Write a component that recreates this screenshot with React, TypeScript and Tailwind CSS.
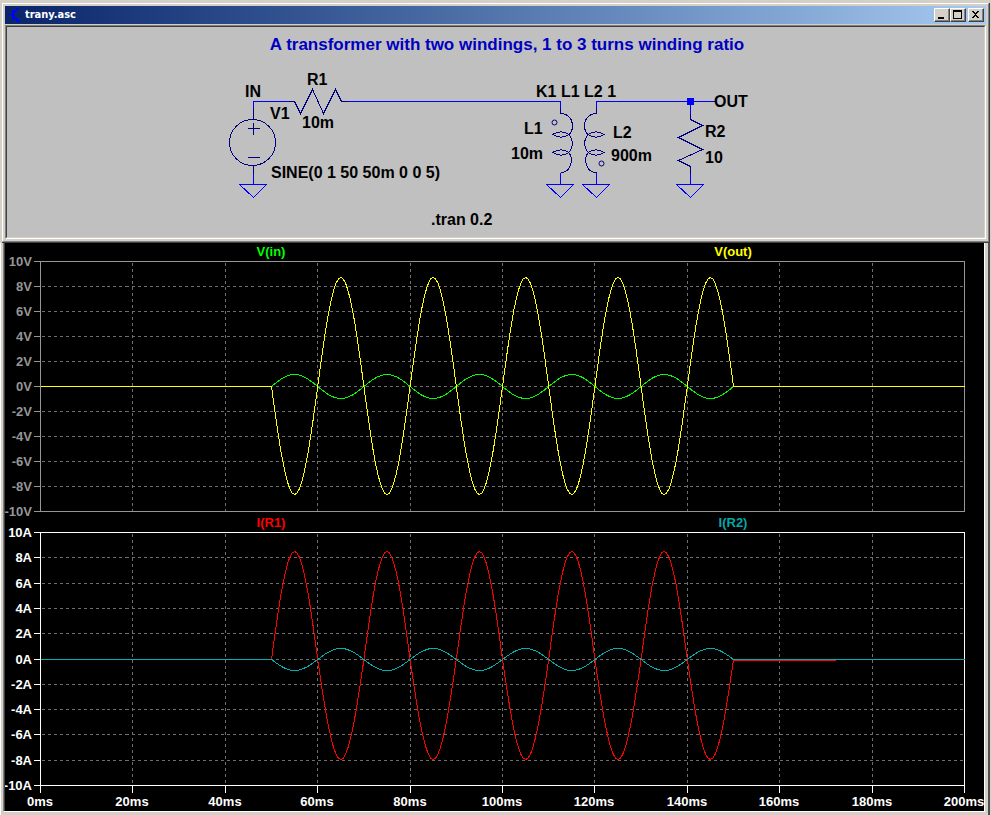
import type { ReactNode } from "react";

const FONT = "font-['Liberation_Sans',Arial,sans-serif] font-bold";

const X0 = 40;
const X1 = 964;
const MS = 200;

const timeTicks = [0, 20, 40, 60, 80, 100, 120, 140, 160, 180, 200];
const levels = [10, 8, 6, 4, 2, 0, -2, -4, -6, -8, -10];

const xAt = (ms: number) => X0 + ((X1 - X0) * ms) / MS;

// five 50 Hz cycles between 50ms and 150ms, flat everywhere else
function burst(mid: number, first: number, second: number) {
  const points: string[] = [];
  for (let ms = 50; ms <= 150; ms += 0.5) {
    const s = Math.sin((2 * Math.PI * (ms - 50)) / 20);
    const y = mid - (s >= 0 ? s * first : s * second);
    points.push(`${xAt(ms).toFixed(1)},${y.toFixed(1)}`);
  }
  return points.join(" ");
}

function withTails(mid: number, wave: string) {
  return `${X0},${mid} ${wave} ${X1},${mid}`;
}

type PaneProps = {
  top: number;
  bottom: number;
  unit: string;
  axis: string;
  label: string;
  showTime?: boolean;
  children: ReactNode;
};

function PlotPane({ top, bottom, unit, axis, label, showTime, children }: PaneProps) {
  const yAt = (v: number) => Math.round((top + bottom) / 2 - (v * (bottom - top)) / 20);

  return (
    <g>
      <g transform="translate(0.5 0.5)" fill="none" shapeRendering="crispEdges">
        <g stroke="#6e6e6e" strokeDasharray="3 3">
          {timeTicks.slice(1, -1).map((t) => (
            <line key={t} x1={Math.round(xAt(t))} x2={Math.round(xAt(t))} y1={top + 1} y2={bottom} />
          ))}
          {levels.slice(1, -1).map((v) => (
            <line key={v} x1={X0 + 1} x2={X1 - 2} y1={yAt(v)} y2={yAt(v)} />
          ))}
        </g>
        <g stroke={axis}>
          <rect x={X0} y={top} width={X1 - X0} height={bottom - top} />
          {levels.map((v) => (
            <line key={v} x1={33} x2={X0} y1={yAt(v)} y2={yAt(v)} />
          ))}
          {showTime &&
            timeTicks.map((t) => (
              <line key={t} x1={Math.round(xAt(t))} x2={Math.round(xAt(t))} y1={bottom} y2={bottom + 7} />
            ))}
        </g>
        {children}
      </g>
      <g fill={label} textAnchor="end">
        {levels.map((v) => (
          <text key={v} x={32} y={yAt(v) + 5}>
            {v}
            {unit}
          </text>
        ))}
      </g>
      {showTime && (
        <g fill={label} textAnchor="middle">
          {timeTicks.map((t) => (
            <text key={t} x={Math.round(xAt(t))} y={bottom + 21}>
              {t}ms
            </text>
          ))}
        </g>
      )}
    </g>
  );
}

function Waveforms() {
  return (
    <svg viewBox="5 243 979 568" className={`block h-auto w-full bg-black text-[13px] ${FONT}`}>
      <PlotPane top={261} bottom={511} unit="V" axis="#969696" label="#969696">
        <polyline stroke="#00ff00" points={withTails(386, burst(386, 12, 12))} />
        <polyline stroke="#ffff00" points={withTails(386, burst(386, -108, -109))} />
      </PlotPane>
      <PlotPane top={532} bottom={785} unit="A" axis="#ffffff" label="#ffffff" showTime>
        <polyline stroke="#ff0000" points={burst(659, 108, 100)} />
        <line stroke="#ff0000" x1={733} x2={835} y1={660} y2={660} />
        <polyline stroke="#00b0b0" points={withTails(659, burst(659, -11, -11))} />
      </PlotPane>
      <g textAnchor="middle">
        <text x={271} y={256} fill="#00ff00">V(in)</text>
        <text x={733} y={256} fill="#ffff00">V(out)</text>
        <text x={271} y={527} fill="#ff0000">I(R1)</text>
        <text x={733} y={527} fill="#00a8a8">I(R2)</text>
      </g>
    </svg>
  );
}

const schematicLabels = [
  { x: 245, y: 97, text: "IN" },
  { x: 270, y: 119, text: "V1" },
  { x: 307, y: 85, text: "R1" },
  { x: 302, y: 128, text: "10m" },
  { x: 271, y: 178, text: "SINE(0 1 50 50m 0 0 5)" },
  { x: 431, y: 225, text: ".tran 0.2" },
  { x: 536, y: 97, text: "K1 L1 L2 1" },
  { x: 524, y: 134, text: "L1" },
  { x: 511, y: 159, text: "10m" },
  { x: 613, y: 138, text: "L2" },
  { x: 611, y: 161, text: "900m" },
  { x: 714, y: 107, text: "OUT" },
  { x: 705, y: 137, text: "R2" },
  { x: 705, y: 163, text: "10" },
];

function Ground({ x }: { x: number }) {
  return <path d={`M${x} 172V184M${x - 14} 184H${x + 13}L${x} 197Z`} />;
}

function Schematic() {
  return (
    <svg viewBox="7 27 977 210" className={`block h-auto w-full bg-[#c0c0c0] text-[16px] ${FONT}`}>
      <g transform="translate(0.5 0.5)" fill="none" shapeRendering="crispEdges">
        <g stroke="#0000ff">
          <path d="M253 107V101H288M347 101H560V107M596 107V101H714M690 101V113" />
          <Ground x={253} />
          <Ground x={560} />
          <Ground x={596} />
          <Ground x={690} />
        </g>
        <g stroke="#000080">
          <path d="M253 107V119M253 165V173M247 128H259M253 122V134M247 157H259" />
          <circle cx={252} cy={142} r={23} />
          <path d="M288 101H294L300 113L312 89L323 113L335 89L341 101H347" />
          <path d="M560 107V113C568 113 572 119 572 125C572 130 570 134 568 134C573 138 573 148 568 152C573 156 572 172 560 172" />
          <path d="M568 134C564 130 557 131 552 134C557 137 564 138 568 134M568 152C564 148 557 149 552 152C557 155 564 156 568 152" />
          <path d="M596 107V113C588 113 584 119 584 125C584 130 586 134 588 134C583 138 583 148 588 152C583 156 584 172 596 172" />
          <path d="M588 134C592 130 599 131 604 134C599 137 592 138 588 134M588 152C592 148 599 149 604 152C599 155 592 156 588 152" />
          <path d="M690 113V119L702 125L678 137L702 149L678 160L690 166V173" />
        </g>
        <g stroke="#000080" shapeRendering="geometricPrecision">
          <circle cx={554} cy={122} r={2.5} />
          <circle cx={601} cy={163} r={2.5} />
        </g>
      </g>
      <rect x={687} y={98} width={7} height={7} fill="#0000ff" />
      <text x={507} y={50} fill="#0000c0" textAnchor="middle" className="text-[17px]">
        A transformer with two windings, 1 to 3 turns winding ratio
      </text>
      {schematicLabels.map((l) => (
        <text key={`${l.x}-${l.y}`} x={l.x} y={l.y} fill="#000000">
          {l.text}
        </text>
      ))}
    </svg>
  );
}

function CaptionButton({ label, children }: { label: string; children: ReactNode }) {
  return (
    <button
      type="button"
      aria-label={label}
      className="h-[14px] w-4 border border-b-[#404040] border-l-white border-r-[#404040] border-t-white bg-[#d4d0c8]"
    >
      <span className="block h-full border-b border-r border-[#808080]">
        <svg viewBox="0 0 13 11" className="block h-[11px] w-[13px]" shapeRendering="crispEdges">
          {children}
        </svg>
      </span>
    </button>
  );
}

function TitleBar() {
  return (
    <header className="mb-px flex h-[18px] items-center bg-linear-to-r from-[#0a246a] to-[#a6caf0] px-0.5">
      <svg viewBox="0 0 16 16" className="mr-0.5 h-4 w-4" fill="none" stroke="#0000ff" shapeRendering="crispEdges">
        <path d="M2 7.5H6M11.5 1L6.5 6M6.5 9L11.5 14" />
        <path d="M6 3V13" strokeWidth={2} />
        <path d="M13 15.5L8 14L11 11Z" fill="#0000ff" stroke="none" />
      </svg>
      <h1 className="flex-1 font-['DejaVu_Sans_Condensed','DejaVu_Sans',Tahoma,sans-serif] text-[11px] leading-4 font-bold text-white">
        trany.asc
      </h1>
      <div className="flex">
        <CaptionButton label="Minimize">
          <path d="M3 8H9V10H3Z" />
        </CaptionButton>
        <CaptionButton label="Maximize">
          <path d="M2 1H11V10H2ZM3 3V9H10V3Z" fillRule="evenodd" />
        </CaptionButton>
        <div className="ml-0.5 flex">
          <CaptionButton label="Close">
            <path d="M3 2H5V3H6V4H7V3H8V2H10V3H9V4H8V5H7V6H8V7H9V8H10V9H8V8H7V7H6V8H5V9H3V8H4V7H5V6H6V5H5V4H4V3H3Z" />
          </CaptionButton>
        </div>
      </div>
    </header>
  );
}

export default function App() {
  return (
    <main className="bg-[#d4d0c8] pt-[3px] pr-px">
      <section className="ml-0.5 border-r border-b border-[#404040]">
        <div className="border border-t-white border-r-[#808080] border-b-[#808080] border-l-white p-0.5">
          <TitleBar />
          <div className="border border-t-[#808080] border-r-white border-b-white border-l-[#808080]">
            <div className="border border-t-[#404040] border-r-[#d4d0c8] border-b-[#d4d0c8] border-l-[#404040]">
              <Schematic />
            </div>
          </div>
        </div>
      </section>
      <section className="border-r-2 border-l border-r-[#505050] border-l-white pr-[3px] pb-[3px] pl-0.5">
        <div className="border-r border-b border-l border-r-white border-b-white border-l-[#808080]">
          <div className="border-l border-[#404040]">
            <Waveforms />
          </div>
        </div>
      </section>
    </main>
  );
}
